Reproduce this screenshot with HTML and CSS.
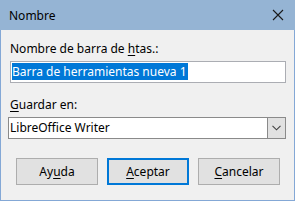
FILE: index.html
```html
<!DOCTYPE html>
<html lang="es">
<head>
<meta charset="utf-8">
<link rel="stylesheet" href="styles.css">
</head>
<body>
<div class="window">
  <div class="titlebar">
    <span class="title">Nombre</span>
    <svg class="close" width="12" height="12" viewBox="0 0 12 12"><path d="M1 1 L11 11 M11 1 L1 11" stroke="#1a1a1a" stroke-width="1.1" fill="none"/></svg>
  </div>
  <div class="content">
    <div class="label">Nombre de barra de <u>h</u>tas.:</div>
    <div class="input"><span class="sel">Barra de herramientas nueva 1</span></div>
    <div class="label label2"><u>G</u>uardar en:</div>
    <div class="combo">
      <span class="combo-text">LibreOffice Writer</span>
      <span class="combo-btn"><svg width="9" height="6" viewBox="0 0 9 6"><path d="M0.5 0.8 L4.5 4.8 L8.5 0.8" stroke="#404040" stroke-width="1.1" fill="none"/></svg></span>
    </div>
    <div class="buttons">
      <button class="btn">Ay<u>u</u>da</button>
      <button class="btn default"><u>A</u>ceptar</button>
      <button class="btn"><u>C</u>ancelar</button>
    </div>
  </div>
</div>
</body>
</html>
```
FILE: styles.css
```css
html, body {
  margin: 0;
  padding: 0;
}
body {
  font-family: "Noto Sans", "Open Sans", sans-serif;
  font-size: 12px;
  color: #000;
  background: #f0f0f0;
}
.window {
  box-sizing: border-box;
  width: 295px;
  height: 201px;
  border: 1px solid #84a8d6;
  border-top: none;
  background: #f0f0f0;
  display: flex;
  flex-direction: column;
}
.titlebar {
  height: 30px;
  margin: 0 -1px;
  background: #95b4d4;
  display: flex;
  align-items: center;
  justify-content: space-between;
  padding: 0 11px 0 9px;
  flex-shrink: 0;
}
.title {
  font-size: 12px;
  line-height: 16px;
  color: #000;
  padding-top: 1px;
}
.close {
  display: block;
}
.content {
  padding: 11px 8px 0 9px;
  display: flex;
  flex-direction: column;
}
.label {
  line-height: 16px;
  color: #000;
}
.label u, .btn u {
  text-underline-offset: 2px;
}
.input {
  margin-top: 4px;
  box-sizing: border-box;
  height: 22px;
  border: 1px solid #abadb3;
  background: #fff;
  padding: 1px 1px 0 1px;
}
.sel {
  display: inline-block;
  height: 17px;
  line-height: 17px;
  background: #0078d7;
  color: #fff;
  padding-right: 1px;
}
.label2 {
  margin-top: 14px;
}
.combo {
  margin-top: 4px;
  margin-left: -2px;
  box-sizing: border-box;
  height: 22px;
  border: 1px solid #8a8a8a;
  background: #fff;
  display: flex;
  align-items: stretch;
}
.combo-text {
  flex: 1;
  padding-left: 1px;
  line-height: 19px;
}
.combo-btn {
  width: 17px;
  background: #e1e1e1;
  border-left: 1px solid #8a8a8a;
  display: flex;
  align-items: center;
  justify-content: center;
}
.buttons {
  margin-top: 19px;
  display: flex;
  gap: 9px;
  padding-left: 6px;
}
.btn {
  box-sizing: border-box;
  width: 82px;
  height: 27px;
  margin: 0;
  padding: 0;
  font-family: "Noto Sans", "Open Sans", sans-serif;
  font-size: 12px;
  color: #000;
  background: #e1e1e1;
  border: 1px solid #adadad;
}
.btn.default {
  border: 2px solid #0078d7;
}
```
